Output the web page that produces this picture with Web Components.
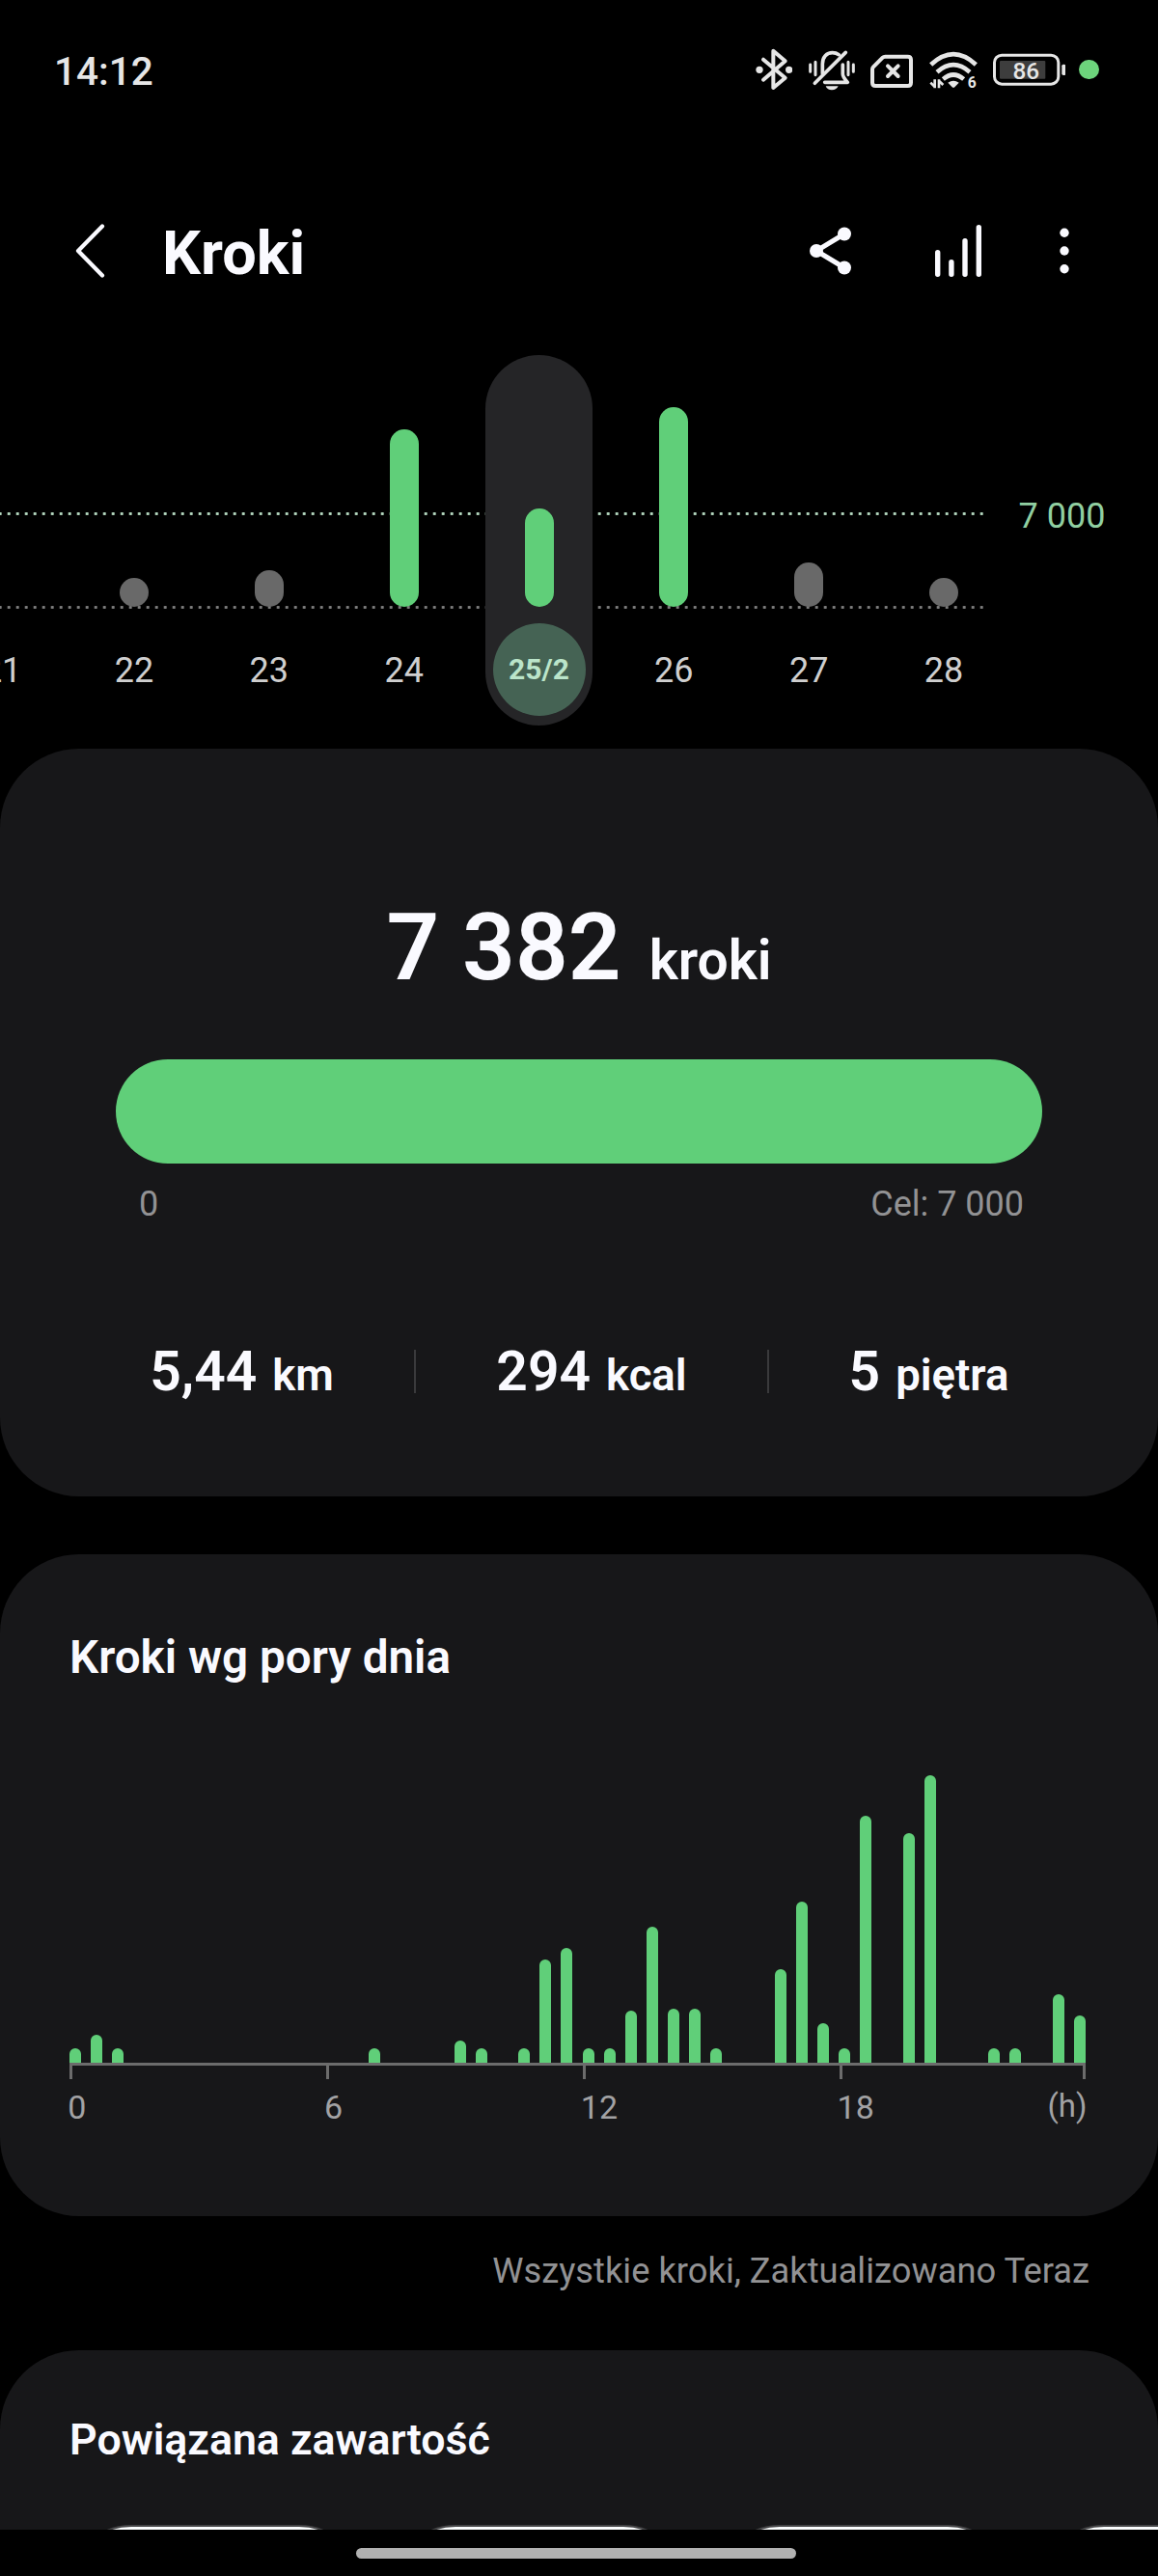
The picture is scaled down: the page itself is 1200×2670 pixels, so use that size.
<!DOCTYPE html>
<html lang="pl">
<head>
<meta charset="utf-8">
<title>Kroki</title>
<style>
  html, body { margin: 0; background: #000; }
  body {
    width: 1200px;
    height: 2670px;
    overflow: hidden;
    font-family: Roboto, "Liberation Sans", sans-serif;
    color: #fafaff;
    --green: #60cf79;
    --card: #171719;
    --muted: #929294;
  }
</style>
</head>
<body>
<steps-screen></steps-screen>

<script>
const define = (tag, css, html, setup) => {
  customElements.define(tag, class extends HTMLElement {
    constructor() {
      super()
      this.attachShadow({ mode: 'open' })
      this.shadowRoot.innerHTML = `<style>${css}</style>${html}`
    }
    connectedCallback() { if (setup) setup(this, this.shadowRoot) }
  })
}

define('status-bar', `
  :host {
    display: flex;
    justify-content: space-between;
    align-items: center;
    box-sizing: border-box;
    height: 152px;
    padding: 0 61.5px 0 56px;
    color: #e6e6e6;
  }
  time { font-size: 40.5px; font-weight: 500; line-height: 48px; padding-bottom: 3.4px; }
  .icons { display: flex; align-items: center; gap: 16.4px; padding-bottom: 8px; }
  svg { display: block; height: 46.67px; fill: none; stroke: currentColor; stroke-linecap: round; stroke-linejoin: round; }
  svg .f { fill: currentColor; stroke: none; }
  text { fill: currentColor; stroke: none; font-family: Roboto, sans-serif; }
  .camera { width: 20.3px; height: 20.3px; border-radius: 50%; background: #6dd47c; margin-left: -2.4px; }
`, `
  <time>14:12</time>
  <div class="icons">
    <svg width="38.7" viewBox="0 0 116 140" stroke-width="12">
      <path d="M24 38 92 95 55 126V11L92 43 24 101"/>
      <circle class="f" cx="12" cy="70" r="11"/><circle class="f" cx="104" cy="70" r="11"/>
    </svg>
    <svg width="48" viewBox="0 0 144 140" stroke-width="11">
      <path stroke-width="9" d="M5 54v22M21 46v40M123 46v40M139 54v22"/>
      <path d="M115 16 19 112"/>
      <path d="M43 82V52C43 30 56 17 74 17c8 0 14 2 20 6"/>
      <path d="M106 54v29c0 9 6 15 15 26H50"/>
      <path class="f" d="M53 121h39c-4 8-11 12-20 12s-16-4-19-12z"/>
    </svg>
    <svg width="44" viewBox="0 0 132 140" stroke-width="12">
      <path d="M46 29h70q10 0 10 10v71q0 10-10 10H16q-10 0-10-10V68q0-4 3-7l29-29q3-3 8-3z"/>
      <path stroke-width="12" d="m54 58 32 32M86 58 54 90"/>
    </svg>
    <svg width="50" viewBox="0 0 150 140" stroke-width="14">
      <path stroke-linecap="butt" d="M5 54Q75-11 145 54M24 77Q75 32 126 77M43 99Q75 72 107 99"/>
      <path class="f" d="M58 110q17-12 34 0l-13 14q-4 3-8 0z"/>
      <path stroke-width="8" stroke-linecap="butt" d="M17 100v27M18 124 4 110M30 127v-27M29 103l14 14"/>
      <text x="119" y="127" font-size="47" font-weight="700">6</text>
    </svg>
    <svg width="75.3" viewBox="0 0 226 140">
      <rect x="4.5" y="24.5" width="199" height="90" rx="23" stroke-width="9"/>
      <rect x="21" y="42" width="142" height="56" rx="3" fill="#3d3d3d" stroke="none"/>
      <rect class="f" x="214" y="53" width="12" height="34" rx="5"/>
      <text x="103" y="100" font-size="73" font-weight="500" text-anchor="middle">86</text>
    </svg>
    <i class="camera"></i>
  </div>
`)

define('app-bar', `
  :host {
    display: flex;
    align-items: center;
    height: 216px;
    padding: 0 92.5px 0 78px;
    box-sizing: border-box;
  }
  h1 { margin: 5px 0 0 59px; flex: 1; font-size: 63px; font-weight: 700; line-height: 74px; }
  svg { display: block; fill: none; stroke: currentColor; stroke-linecap: round; stroke-linejoin: round; }
  .f { fill: currentColor; stroke: none; }
  .share { margin-right: 86px; }
  .trend { margin-right: 80.5px; }
`, `
  <svg width="31" height="56" viewBox="0 0 31 56" stroke-width="4.2"><path d="M28 2.5 3 28l25 25.5"/></svg>
  <h1><slot></slot></h1>
  <svg class="share" width="44" height="50" viewBox="0 0 44 50" stroke-width="5">
    <path d="M36 7.5 7 25l29 17.5"/>
    <circle class="f" cx="7" cy="25" r="7"/><circle class="f" cx="36" cy="7.5" r="7"/><circle class="f" cx="36" cy="42.5" r="7"/>
  </svg>
  <svg class="trend" width="48" height="54" viewBox="0 0 48 54" stroke-width="5.4">
    <path d="M2.7 28.7v22.6M16.9 38.7v12.6M31 16.7v34.6M45.3 2.7v48.6"/>
  </svg>
  <svg class="f" width="10" height="48" viewBox="0 0 10 48">
    <circle cx="5" cy="5.3" r="4.7"/><circle cx="5" cy="24" r="4.7"/><circle cx="5" cy="42.7" r="4.7"/>
  </svg>
`)

define('day-column', `
  :host { display: flex; justify-content: center; width: 139.85px; flex: none; }
  .pill { width: 111px; height: 384px; border-radius: 56px; }
  .plot { height: 261px; display: flex; align-items: flex-end; justify-content: center; }
  .bar { width: 30px; height: var(--h); border-radius: 15px; background: #696969; }
  .day {
    width: 96px;
    height: 96px;
    margin: 16.5px auto 0;
    border-radius: 50%;
    text-align: center;
    font-size: 36px;
    line-height: 98px;
    color: #cfcfcf;
  }
  :host([reached]) .bar { background: var(--green); }
  :host([selected]) .pill { background: #252527; }
  :host([selected]) .day { background: #456354; color: #bbe5ca; font-size: 30px; font-weight: 700; line-height: 96px; }
  :host(:first-of-type) .day { padding-left: 6px; }
`, `
  <div class="pill">
    <div class="plot"><div class="bar"></div></div>
    <div class="day"><slot></slot></div>
  </div>
`, (host, root) => {
  root.querySelector('.bar').style.setProperty('--h', `${host.getAttribute('value')}px`)
})

// Dotted goal line and baseline are drawn behind the columns
define('week-chart', `
  :host { display: flex; height: 408px; }
  .plot {
    width: 1020px;
    background:
      radial-gradient(circle, #b4d8bf 1.3px, transparent 2px) -4.3px 159.8px / 9px 9px repeat-x,
      radial-gradient(circle, #7d7d7d 1.3px, transparent 2px) -4.3px 256.5px / 9px 9px repeat-x;
  }
  .days { display: flex; margin-left: -70.8px; }
  .goal { margin: 146px 0 0 35.5px; font-size: 36px; line-height: 42px; color: #90cfa1; white-space: nowrap; }
`, `
  <div class="plot"><div class="days"><slot></slot></div></div>
  <div class="goal"><slot name="goal"></slot></div>
`)

define('health-card', `
  :host {
    display: block;
    box-sizing: border-box;
    flex: none;
    background: var(--card);
    border-radius: 82px;
  }
  :host([cut]) { border-radius: 82px 82px 0 0; overflow: hidden; }
`, `<slot></slot>`)

define('card-title', `
  :host { display: block; padding-left: 72px; font-size: 47.6px; font-weight: 600; line-height: 56px; }
`, `<slot></slot>`)

define('step-total', `
  :host { display: flex; justify-content: center; align-items: baseline; gap: 29px; height: 114px; line-height: 114px; font-weight: 600; }
  .n { font-size: 96px; }
  .u { font-size: 57px; }
`, `<span class="n"><slot></slot></span><span class="u"><slot name="unit"></slot></span>`)

define('goal-progress', `
  :host { display: block; margin: 59px 120px 0; }
  .bar { height: 108px; border-radius: 54px; background: var(--green); }
  .range {
    display: flex;
    justify-content: space-between;
    padding: 21px 19px 0 24px;
    font-size: 36px;
    line-height: 42px;
    color: var(--muted);
  }
`, `
  <div class="bar"></div>
  <div class="range"><slot name="from"></slot><slot name="to"></slot></div>
`)

define('stat-item', `
  :host { display: flex; justify-content: center; align-items: center; height: 68px; line-height: 68px; font-weight: 600; }
  .text { flex: 1; display: flex; justify-content: center; align-items: baseline; gap: 16px; height: 68px; }
  .n { font-size: 57px; }
  .u { font-size: 45.5px; }
  :host(:not(:last-of-type))::after { content: ""; width: 2px; height: 45px; margin-bottom: 2px; background: #3a3a3c; }
`, `<div class="text"><span class="n"><slot></slot></span><span class="u"><slot name="unit"></slot></span></div>`)

define('stat-row', `
  :host { display: grid; grid-template-columns: 359px 366px 331px; margin: 119px 72px 0; }
`, `<slot></slot>`)

// One bar per half hour, zero means no bar
const HALF_HOURS = [
  15, 29, 15, 0, 0, 0, 0, 0, 0, 0, 0, 0,
  0, 0, 15, 0, 0, 0, 23, 15, 0, 15, 107, 119,
  15, 15, 54, 141, 56, 56, 15, 0, 0, 97, 167, 41,
  15, 256, 0, 238, 298, 0, 0, 15, 15, 0, 71, 49,
]

define('hourly-chart', `
  :host { display: block; margin: 0 74.6px 0 72.2px; }
  .bars {
    display: flex;
    justify-content: space-between;
    align-items: flex-end;
    height: 392px;
    border-bottom: 3px solid #6c6c6c;
  }
  .bars i { width: 12px; border-radius: 6px 6px 0 0; background: var(--green); }
  .scale { display: flex; }
  .scale div { width: 265.8px; flex: none; }
  .scale div::before { content: ""; display: block; width: 3px; height: 14px; background: #6c6c6c; }
  .scale div:last-child { width: auto; flex: 1; margin-left: -60px; display: flex; flex-direction: column; align-items: flex-end; }
  .scale div:nth-last-child(2) { width: auto; flex: 1; }
  span { display: block; margin: 9px 0 0 -2px; font-size: 34px; line-height: 40px; color: #a2a2a4; }
  .scale div:last-child span { margin: 8px -1px 0 0; font-size: 33px; }
`, `
  <div class="bars"></div>
  <div class="scale">
    <div><span>0</span></div><div><span>6</span></div><div><span>12</span></div><div><span>18</span></div><div><span>(h)</span></div>
  </div>
`, (host, root) => {
  root.querySelector('.bars').innerHTML = HALF_HOURS.map(h => `<i style="height:${h}px"></i>`).join('')
})

define('update-note', `
  :host {
    display: block;
    box-sizing: border-box;
    height: 139px;
    padding: 36px 71px 0 0;
    text-align: right;
    font-size: 36.3px;
    line-height: 42px;
    color: var(--muted);
  }
`, `<slot></slot>`)

define('content-tiles', `
  :host { display: flex; gap: 34px; margin: 59.5px 0 0 72px; }
  div { flex: none; box-sizing: border-box; width: 302px; height: 300px; border-radius: 64px; border: 2px solid #434345; background: #fafcfd; }
  div:first-child { background: #c9cdd0; }
`, `<div></div><div></div><div></div><div></div>`)

define('nav-handle', `
  :host { display: flex; flex: none; height: 48px; justify-content: center; background: #000; }
  i { width: 456px; height: 11px; margin: 19px 6px 0 0; border-radius: 5.5px; background: #b1b1b1; }
`, `<i></i>`)

define('steps-screen', `
  :host { display: flex; flex-direction: column; width: 1200px; height: 2670px; }
  .summary { height: 775px; padding-top: 149px; }
  .hours { height: 686px; margin-top: 60px; padding-top: 78.6px; }
  .related { height: 186px; padding-top: 65px; }
  .related card-title { font-size: 44.7px; }
`, `
  <status-bar></status-bar>
  <app-bar>Kroki</app-bar>
  <week-chart>
    <day-column value="0">21</day-column>
    <day-column value="30">22</day-column>
    <day-column value="38">23</day-column>
    <day-column value="184" reached>24</day-column>
    <day-column value="102" reached selected>25/2</day-column>
    <day-column value="207" reached>26</day-column>
    <day-column value="46">27</day-column>
    <day-column value="30">28</day-column>
    <span slot="goal">7 000</span>
  </week-chart>
  <health-card class="summary">
    <step-total>7 382<span slot="unit">kroki</span></step-total>
    <goal-progress><span slot="from">0</span><span slot="to">Cel: 7 000</span></goal-progress>
    <stat-row>
      <stat-item>5,44<span slot="unit">km</span></stat-item>
      <stat-item>294<span slot="unit">kcal</span></stat-item>
      <stat-item>5<span slot="unit">piętra</span></stat-item>
    </stat-row>
  </health-card>
  <health-card class="hours">
    <card-title>Kroki wg pory dnia</card-title>
    <hourly-chart></hourly-chart>
  </health-card>
  <update-note>Wszystkie kroki, Zaktualizowano Teraz</update-note>
  <health-card class="related" cut>
    <card-title>Powiązana zawartość</card-title>
    <content-tiles></content-tiles>
  </health-card>
  <nav-handle></nav-handle>
`)
</script>
</body>
</html>
